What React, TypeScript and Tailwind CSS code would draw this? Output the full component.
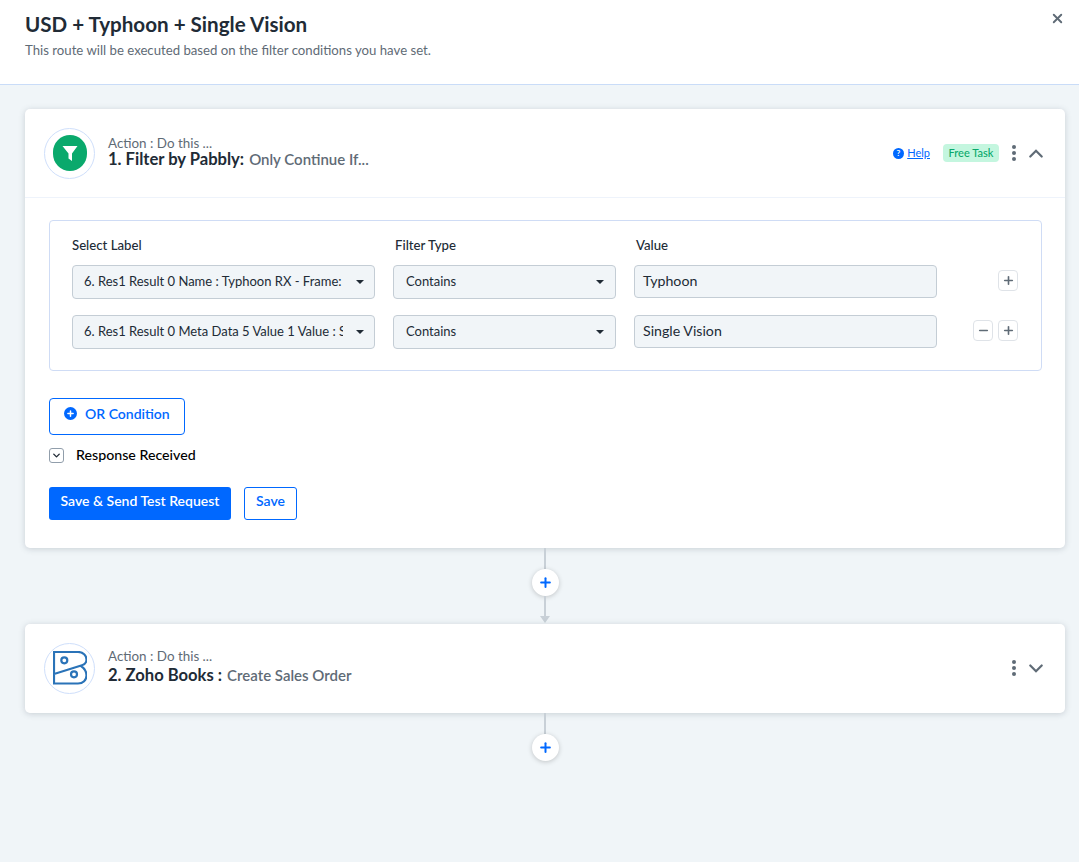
import { ChevronDown, Plus, Minus, X } from 'lucide-react'

const font = "font-['Lato','Noto_Sans',sans-serif]"

const rows = [
  { label: '6. Res1 Result 0 Name : Typhoon RX - Frame: Black', value: 'Typhoon', canRemove: false },
  { label: '6. Res1 Result 0 Meta Data 5 Value 1 Value : Single Vision', value: 'Single Vision', canRemove: true },
]

function Dots() {
  return (
    <div className="flex flex-col gap-[2px]">
      <span className="h-1 w-1 rounded-full bg-[#5f6b76]" />
      <span className="h-1 w-1 rounded-full bg-[#5f6b76]" />
      <span className="h-1 w-1 rounded-full bg-[#5f6b76]" />
    </div>
  )
}

function Caret() {
  return <span className="h-0 w-0 border-x-4 border-t-4 border-x-transparent border-t-[#212b36]" />
}

function Chevron({ up }: { up?: boolean }) {
  return (
    <svg width="14" height="9" viewBox="0 0 14 9" fill="none" stroke="#5f6b76" strokeWidth="2.2" strokeLinecap="round">
      <path d={up ? 'M1.3 7.5L7 1.8L12.7 7.5' : 'M1.3 1.5L7 7.2L12.7 1.5'} />
    </svg>
  )
}

function LabelSelect({ text }: { text: string }) {
  return (
    <div className="flex h-[34px] w-[303px] items-center justify-between rounded-[4px] border border-[#c4cdd5] bg-[#f1f5f8] pr-[10px] pl-[11px]">
      <span className="w-[259px] overflow-hidden text-[13px] whitespace-nowrap text-[#212b36]">{text}</span>
      <Caret />
    </div>
  )
}

function TypeSelect() {
  return (
    <div className="flex h-[34px] w-[223px] items-center justify-between rounded-[4px] border border-[#c4cdd5] bg-[#f1f5f8] pr-[11px] pl-3">
      <span className="text-[13px] text-[#212b36]">Contains</span>
      <Caret />
    </div>
  )
}

function SmallButton({ children }: { children: React.ReactNode }) {
  return (
    <div className="flex h-[21px] w-5 items-center justify-center rounded-[4px] border border-[#dfe3e8] bg-white text-[#5f6b76]">
      {children}
    </div>
  )
}

function AddStep({ arrow }: { arrow?: boolean }) {
  return (
    <div className="flex flex-col items-center">
      <div className="h-[21px] w-0.5 bg-[#c8d0d7]" />
      <div className="flex h-[27px] w-[27px] items-center justify-center rounded-full bg-white shadow-[0_1px_5px_rgba(0,0,0,0.2)]">
        <Plus size={15} strokeWidth={3.2} className="text-[#0068ff]" />
      </div>
      {arrow && (
        <>
          <div className="h-[20px] w-0.5 bg-[#c8d0d7]" />
          <span className="h-0 w-0 border-x-[5.5px] border-t-[7px] border-x-transparent border-t-[#c8d0d7]" />
          <div className="h-px" />
        </>
      )}
    </div>
  )
}

type HeadProps = {
  icon: React.ReactNode
  title: string
  sub: string
  lineClass: string
  children: React.ReactNode
}

function StepHead({ icon, title, sub, lineClass, children }: HeadProps) {
  return (
    <div className="flex h-[88px] items-center pr-[22px] pl-[19px]">
      <div className="flex h-[51px] w-[51px] items-center justify-center rounded-full border border-[#cfdffb] bg-white">
        {icon}
      </div>
      <div className={`ml-[13px] flex flex-col ${lineClass}`}>
        <span className="text-[13.4px] leading-[14px] text-[#5f6b76]">Action : Do this ...</span>
        <span className="text-[16.6px] leading-[19px] font-bold text-[#212b36]">
          {title}
          <span className="ml-[5px] text-[15px] font-semibold text-[#5f6b76]">{sub}</span>
        </span>
      </div>
      <div className="ml-auto flex items-center">{children}</div>
    </div>
  )
}

export default function App() {
  return (
    <div className={`${font} flex h-[862px] w-[1079px] flex-col overflow-hidden bg-[#f0f5f8]`}>
      <header className="flex h-[85px] shrink-0 items-start justify-between border-b border-[#c9dcf8] bg-white pt-[12px] pr-[14px] pl-[25px]">
        <div>
          <h1 className="text-[20.6px] leading-[24px] font-bold text-[#212b36]">USD + Typhoon + Single Vision</h1>
          <p className="mt-[4px] text-[13.2px] leading-[20px] text-[#5f6b76]">
            This route will be executed based on the filter conditions you have set.
          </p>
        </div>
        <X size={15} strokeWidth={3} className="mt-[-1px] text-[#5f6b76]" />
      </header>

      <main className="flex flex-col px-[14px] pt-6 pl-[25px]">
        <section className="rounded-[5px] bg-white shadow-[0_1px_6px_rgba(60,75,90,0.22)]">
          <div className="border-b border-[#eef3fb]">
            <StepHead
              title="1. Filter by Pabbly:"
              sub="Only Continue If..."
              lineClass="-mt-[2px]"
              icon={
                <div className="flex h-[36px] w-[34px] items-center justify-center rounded-full bg-[#0aa96c]">
                  <svg width="16" height="17" viewBox="0 0 16 17" fill="#fff">
                    <path d="M0.5 1H15.5L10 8.5V16L6.5 13.5V8.5Z" />
                  </svg>
                </div>
              }
            >
              <svg width="11" height="11" viewBox="0 0 12 12" className="mr-[3px]">
                <circle cx="6" cy="6" r="6" fill="#0068ff" />
                <text x="6" y="9.2" textAnchor="middle" fontSize="9" fontWeight="700" fill="#fff">?</text>
              </svg>
              <a className="text-[11px] text-[#0068ff] underline">Help</a>
              <span className="ml-[13px] w-[56px] rounded-[4px] bg-[#c4f6df] py-[1px] text-center text-[11px] leading-[16px] font-medium text-[#0aa96c]">
                Free Task
              </span>
              <div className="mr-[13px] ml-[13px]"><Dots /></div>
              <Chevron up />
            </StepHead>
          </div>

          <div className="px-6 pt-[22px] pb-[28px]">
            <div className="h-[151px] w-[993px] rounded-[4px] border border-[#cfdcf5] px-[22px] pt-[15px]">
              <div className="flex text-[13.2px] leading-[18px] font-medium text-[#212b36]">
                <span className="w-[323px]">Select Label</span>
                <span className="w-[241px]">Filter Type</span>
                <span>Value</span>
              </div>
              <div className="mt-[11px] flex flex-col gap-4">
                {rows.map((row) => (
                  <div key={row.value} className="flex items-start">
                    <LabelSelect text={row.label} />
                    <div className="ml-[18px]">
                      <TypeSelect />
                    </div>
                    <div className="ml-[18px] flex h-[33px] w-[303px] items-center rounded-[4px] border border-[#c4cdd5] bg-[#f1f5f8] pb-[2px] pl-2 text-[14.2px] text-[#212b36]">
                      {row.value}
                    </div>
                    <div className="mt-[5px] ml-[36px] flex w-[45px] justify-end gap-[5px]">
                      {row.canRemove && (
                        <SmallButton>
                          <Minus size={13} strokeWidth={3} />
                        </SmallButton>
                      )}
                      <SmallButton>
                        <Plus size={13} strokeWidth={3} />
                      </SmallButton>
                    </div>
                  </div>
                ))}
              </div>
            </div>

            <button className="mt-[27px] flex h-[37px] w-[136px] items-center rounded-[4px] border border-[#0068ff] pb-[6px] pl-[14px] text-[14px] font-semibold text-[#0068ff]">
              <span className="mr-[8px] flex h-[13px] w-[13px] items-center justify-center rounded-full bg-[#0068ff]">
                <Plus size={9} strokeWidth={4} className="text-white" />
              </span>
              OR Condition
            </button>

            <div className="mt-[12px] flex h-[17px] items-center">
              <span className="flex h-[15px] w-[15px] items-center justify-center rounded-[3px] border border-[#919eab]">
                <ChevronDown size={11} strokeWidth={3} className="text-[#212b36]" />
              </span>
              <span className="ml-3 pb-[2px] text-[14.2px] font-medium text-black">Response Received</span>
            </div>

            <div className="mt-[23px] flex gap-[13px]">
              <button className="h-[33px] w-[182px] rounded-[3px] bg-[#0068ff] pb-[6px] text-[14px] font-semibold text-white">
                Save & Send Test Request
              </button>
              <button className="h-[33px] w-[53px] rounded-[3px] border border-[#0068ff] pb-[6px] text-[14px] font-semibold text-[#0068ff]">
                Save
              </button>
            </div>
          </div>
        </section>

        <AddStep arrow />

        <section className="rounded-[5px] bg-white pb-px shadow-[0_1px_6px_rgba(60,75,90,0.22)]">
          <StepHead
            title="2. Zoho Books :"
            sub="Create Sales Order"
            lineClass="-mt-[2px] gap-[3px]"
            icon={
              <svg width="34" height="34" viewBox="8 9 34 34" fill="none" stroke="#2a73b8" strokeWidth="2.2">
                <path d="M9 32V10H33C38 10 41.5 13.5 41.5 17.5C41.5 20.5 39.5 22.5 37 23.2L9 32V41.5H33C38 41.5 41.5 38 41.5 33.5C41.5 29 39 26 36 24" />
                <circle cx="19.3" cy="18.3" r="3" />
                <circle cx="29" cy="32.3" r="3" />
              </svg>
            }
          >
            <div className="mr-[13px]"><Dots /></div>
            <Chevron />
          </StepHead>
        </section>

        <AddStep />
      </main>
    </div>
  )
}
